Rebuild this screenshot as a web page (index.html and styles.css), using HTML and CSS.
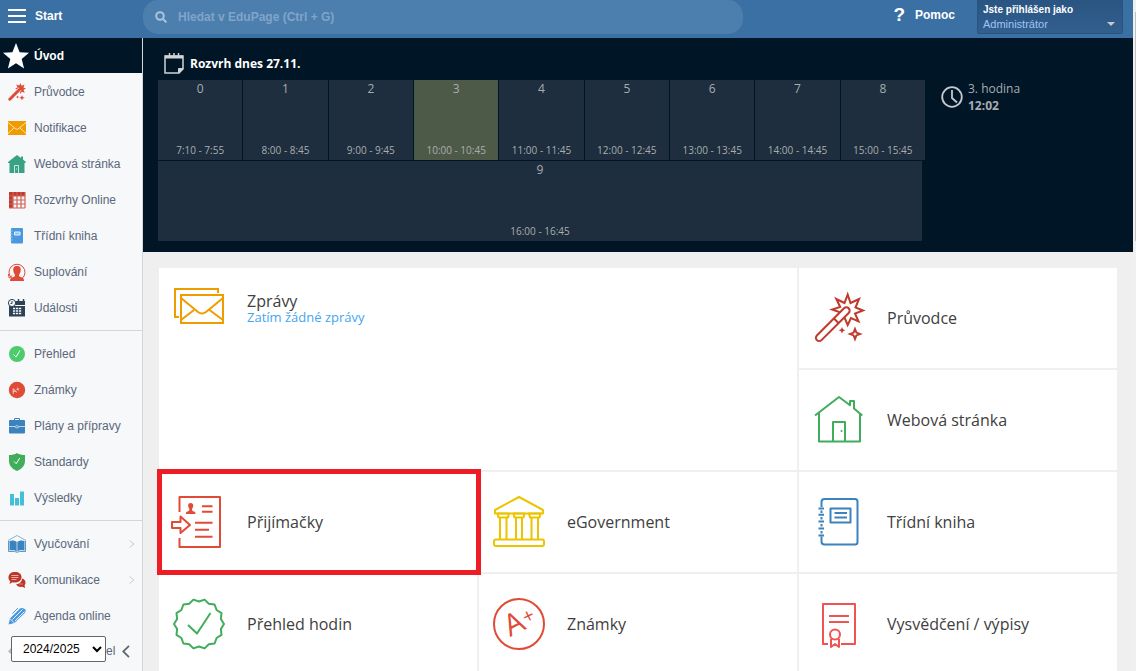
FILE: index.html
```html
<!DOCTYPE html>
<html lang="cs">

<head>
    <meta charset="utf-8">
    <meta name="viewport" content="width=device-width, initial-scale=1.0">
    <title>EduPage</title>
    <link rel="stylesheet" href="styles.css">
</head>

<body>
    <div class="page">
        <header class="topbar">
            <button class="start" type="button">
                <svg width="18" height="14" viewBox="0 0 18 14" aria-hidden="true"><path d="M0 1h18M0 7h18M0 13h18" stroke="#fff" stroke-width="2"/></svg>
                Start
            </button>
            <form class="search">
                <svg width="12" height="12" viewBox="0 0 12 12" fill="none" stroke="#a9c3dd" stroke-width="2" aria-hidden="true"><circle cx="5" cy="5" r="3.8"/><path d="M8 8l3.4 3.4"/></svg>
                <input type="text" placeholder="Hledat v EduPage (Ctrl + G)" aria-label="Hledat v EduPage">
            </form>
            <div class="topright">
                <a class="help" href="#"><span class="question">?</span>Pomoc</a>
                <button class="user" type="button">
                    <span class="logged">Jste přihlášen jako</span>
                    <span class="role">Administrátor</span>
                    <svg width="8" height="4" viewBox="0 0 8 4" aria-hidden="true"><path d="M0 0h8L4 4z" fill="#c5c9cd"/></svg>
                </button>
            </div>
        </header>

        <nav class="sidebar">
            <a class="item active" href="#">
                <svg class="star" width="26" height="26" viewBox="0 0 26 26"><path d="M13 0l3.6 9.2 9.4.5-7.3 6.2 2.4 9.6L13 20.300l-8.100 5.200 2.400-9.600L0 9.700l9.400-.5z" fill="#fff"/></svg>
                Úvod
            </a>
            <a class="item" href="#">
                <svg class="ico" viewBox="0 0 18 18"><path d="M12.500 0l1 2.700 3-1.200-1 3 2.500 1.300-2.500 1 1.200 3-3-1-1.300 2.200-1-2.700-3 1 1-3L7 5.500l2.600-1L8.200 1.600l3 1z" fill="#e04b38"/><path d="M1.500 16.500L12 6" stroke="#f6f8fa" stroke-width="4"/><path d="M1.800 16.200L11.500 6.500" stroke="#e04b38" stroke-width="3" stroke-linecap="round"/><path d="M14 12l.8 2 2 .8-2 .8-.8 2-.8-2-2-.8 2-.8zM9.500 12.500l.5 1 1 .5-1 .5-.5 1-.5-1-1-.5 1-.5z" fill="#e04b38"/></svg>
                Průvodce
            </a>
            <a class="item" href="#">
                <svg class="ico" viewBox="0 0 18 18"><path d="M0 2h18v14H0z" fill="#f09c00"/><path d="M0 3.500l8 6.500q1 .8 2 0l8-6.500M0 14.500l6-5.500M18 14.500L12 9" fill="none" stroke="#fbe5b5"/></svg>
                Notifikace
            </a>
            <a class="item" href="#">
                <svg class="ico" viewBox="0 0 18 18"><path d="M9 0l4 3V1.500h2V4.500l3 2.500-.7 1H16.500v10H1.500V8H0V7z" fill="#3aa284"/><path d="M6.500 18v-7.500h4V18" fill="none" stroke="#c9e8de"/><path d="M8 14h1" stroke="#c9e8de"/></svg>
                Webová stránka
            </a>
            <a class="item" href="#">
                <svg class="ico" viewBox="0 0 18 18"><path d="M1 1h16v4H5v12H1z" fill="#c23a2c"/><path d="M1 5h16M1 9h16M1 13h16M1 17h16M5 1v16M9 1v16M13 1v16M17 1v16" stroke="#cf6156" stroke-width="1.200"/></svg>
                Rozvrhy Online
            </a>
            <a class="item" href="#">
                <svg class="ico" viewBox="0 0 18 18"><rect x="3" y="1" width="12" height="15.500" rx="1" fill="#4a98dd"/><path d="M6.500 5h5.500v3H6.500z" fill="#8dc0ee" stroke="#e8f3fd"/><path d="M2 4h2.500M2 7h2.500M2 10h2.500M2 13h2.500" stroke="#a9cdef"/></svg>
                Třídní kniha
            </a>
            <a class="item" href="#">
                <svg class="ico" viewBox="0 0 18 18"><path d="M4 15.500A8 8 0 1 1 14 15.500" fill="none" stroke="#e04b38"/><path d="M.3 11l1 4 3-2.500" fill="none" stroke="#e04b38"/><path d="M9 3c3 0 4 2 3.700 4.500C12.500 10 11.500 11 11 12c0 1.500 1 2 3 2.500 1.500.5 2 1.500 2 3.500H2c0-2 .5-3 2-3.500 2-.5 3-1 3-2.500-.5-1-1.500-2-1.700-4.500C5 5 6 3 9 3z" fill="#e04b38"/></svg>
                Suplování
            </a>
            <a class="item" href="#">
                <svg class="ico" viewBox="0 0 18 18"><path d="M1 2h16v15.500H1z" fill="#2e4257"/><path d="M5 6.500h13" stroke="#f6f8fa"/><path d="M5 9.500h9M5 12h9M5 14.500h9" stroke="#f6f8fa" stroke-width="1.600" stroke-dasharray="2.200 .8"/><path d="M10.500 0v3.500M15.500 0v3.500" stroke="#2e4257" stroke-width="1.500"/><circle cx="4" cy="4" r="3.600" fill="#f6f8fa" stroke="#2e4257"/><path d="M4 2v2.500H2.500" fill="none" stroke="#2e4257"/></svg>
                Události
            </a>
            <hr>
            <a class="item" href="#">
                <svg class="ico" viewBox="0 0 18 18"><circle cx="9" cy="9" r="8" fill="#4ccc6c"/><path d="M5.500 9.500l2.500 2.500L12 5.500" fill="none" stroke="#fff"/></svg>
                Přehled
            </a>
            <a class="item" href="#">
                <svg class="ico" viewBox="0 0 18 18"><circle cx="9" cy="9" r="8.200" fill="#e04b38"/><text class="grade-small" transform="translate(5 13) rotate(-22)">A+</text></svg>
                Známky
            </a>
            <a class="item" href="#">
                <svg class="ico" viewBox="0 0 18 18"><path d="M6.500 3V1.500h5V3" fill="none" stroke="#3c82bd"/><rect x="1" y="3" width="16" height="13.500" rx="1" fill="#3c82bd"/><path d="M1 9.500h6M11 9.500h6" stroke="#b9d5eb"/><ellipse cx="9" cy="9.800" rx="1.800" ry="1.100" fill="none" stroke="#b9d5eb"/></svg>
                Plány a přípravy
            </a>
            <a class="item" href="#">
                <svg class="ico" viewBox="0 0 18 18"><path d="M9 0c2 1.500 5 2 8 2v6c0 5-4 8.500-8 10-4-1.500-8-5-8-10V2c3 0 6-.5 8-2z" fill="#40ad5b"/><path d="M6 8.500l2.200 2.200L11.800 5" fill="none" stroke="#fff"/></svg>
                Standardy
            </a>
            <a class="item" href="#">
                <svg class="ico" viewBox="0 0 18 18"><path d="M2 5h4v11.500H2zM7 9h4v7.500H7zM12 2.500h4v14h-4z" fill="#44bfd8"/></svg>
                Výsledky
            </a>
            <hr>
            <a class="item" href="#">
                <svg class="ico" viewBox="0 0 18 18"><path d="M0 5.500l9-5 9 5" fill="none" stroke="#85b3d8"/><path d="M1.500 6c3-1 5.500-.5 7.500 1 2-1.500 4.500-2 7.500-1v9.500c-3-.5-5.500-.5-7.500 1-2-1.500-4.500-1.500-7.500-1z" fill="#3c82bd"/><path d="M9 7v9" stroke="#b9d5eb"/><path d="M.5 6v10.500h6l2.500.8 2.500-.8h6V6" fill="none" stroke="#5c99cb"/></svg>
                Vyučování
                <svg class="more" viewBox="0 0 6 8"><path d="M.5.5L5 4 .5 7.500"/></svg>
            </a>
            <a class="item" href="#">
                <svg class="ico" viewBox="0 0 18 18"><path d="M7 1c4 0 6.500 2 6.500 5S11 11.500 7 11.500c-1 0-1.500 0-2.500-.3L1.500 13l.8-2.800C1 9.500.5 8 .5 6.500.5 3 3 1 7 1z" fill="#bf3527"/><path d="M3.500 4.500h7M3.500 6.500h7M3.500 8.500h5" stroke="#f3d0cb" stroke-width=".8"/><path d="M14 7.500c2 .5 3.500 2 3.500 4 0 1.500-.5 2-1 2.700l.7 2.800-3-1.200c-3 .5-5-.6-6-2.600 3.500-.2 5.800-2.700 5.800-5.700z" fill="#bf3527"/><path d="M11.500 13h1M13.500 13h1" stroke="#f3d0cb"/></svg>
                Komunikace
                <svg class="more" viewBox="0 0 6 8"><path d="M.5.5L5 4 .5 7.500"/></svg>
            </a>
            <a class="item" href="#">
                <svg class="ico" viewBox="0 0 18 18"><path d="M.5 17.500L2 11.500 12 1.500c1-1 3-.5 4 0l1.500 1.200c.5 1 0 2.300-.8 3.300L6.500 16z" fill="#4a98dd"/><path d="M2.200 11.800l4 4M4.500 12.500L14.500 2.500M7 14L16.500 4.500" stroke="#e4f0fb"/><path d="M10 1L4.500 6.500" stroke="#4a98dd"/></svg>
                Agenda online
            </a>
            <div class="sidefoot">
                <svg width="3" height="6" viewBox="0 0 3 6"><path d="M3 0v6L0 3.500z" fill="#b4bdb9"/></svg>
                <select aria-label="Školní rok">
                    <option>2024/2025</option>
                </select>
                <span>el</span>
                <button class="collapse" type="button" aria-label="Skrýt menu">
                    <svg width="8" height="13" viewBox="0 0 8 13"><path d="M7 .8L1.200 6.500 7 12.200" fill="none" stroke="#60686f" stroke-width="1.800"/></svg>
                </button>
            </div>
        </nav>

        <main>
            <section class="today">
                <h1>
                    <svg width="20" height="22" viewBox="0 0 20 22" fill="none" stroke="#d0d4d7"><path d="M1 21V4h18v13l-4 4z" stroke-width="1.500"/><path d="M1 5h18" stroke-width="3"/><path d="M5.500 1v5M10 1v5M14.500 1v5" stroke-width="1.500"/><path d="M14.500 21v-4.500H19z" fill="#d0d4d7"/></svg>
                    Rozvrh dnes 27.11.
                </h1>
                <div class="today-row">
                    <ol class="lessons">
                        <li><b>0</b><span>7:10 - 7:55</span></li>
                        <li><b>1</b><span>8:00 - 8:45</span></li>
                        <li><b>2</b><span>9:00 - 9:45</span></li>
                        <li class="now"><b>3</b><span>10:00 - 10:45</span></li>
                        <li><b>4</b><span>11:00 - 11:45</span></li>
                        <li><b>5</b><span>12:00 - 12:45</span></li>
                        <li><b>6</b><span>13:00 - 13:45</span></li>
                        <li><b>7</b><span>14:00 - 14:45</span></li>
                        <li><b>8</b><span>15:00 - 15:45</span></li>
                        <li class="wide"><b>9</b><span>16:00 - 16:45</span></li>
                    </ol>
                    <div class="clock">
                        <svg width="22" height="22" viewBox="0 0 22 22" fill="none" stroke="#c6cace" stroke-width="1.800"><circle cx="11" cy="11" r="9.800"/><path d="M11 4v8l5 4.500"/></svg>
                        <p>3. hodina<br><strong>12:02</strong></p>
                    </div>
                </div>
            </section>

            <section class="tiles">
                <a class="tile news" href="#">
                    <svg class="big orange" viewBox="0 0 52 52"><path d="M8 13h42v28H8zM45 11V7H2v28h4M8 16l17 14q4 3 8 0l17-14M8 38l13-10M50 38L36.500 28"/></svg>
                    <span>Zprávy<small>Zatím žádné zprávy</small></span>
                </a>
                <a class="tile" href="#">
                    <svg class="big darkred" viewBox="0 0 52 52"><path d="M34.700 2.500l2.800 8.500L46 7l-3.500 8.500 7.500 3-8 3 3.500 7.800-7.500-3.300-3.300 7-3-7-4-5.500-8.500-3 8-2.500L23.300 7l8.200 4z"/><rect class="cut" x="-20" y="-3.300" width="45" height="6.600" rx="3.300" transform="translate(18 34) rotate(-45)"/><path d="M21 26.500l4.700 4.700"/><path d="M42 37l1.400 3.600L47 42l-3.600 1.400L42 47l-1.400-3.600L37 42l3.600-1.400z"/><path class="fill-darkred" d="M29 35l1 2.300 2.300 1-2.300 1-1 2.300-1-2.300-2.300-1 2.300-1z"/></svg>
                    <span>Průvodce</span>
                </a>
                <a class="tile" href="#">
                    <svg class="big green" viewBox="0 0 52 52"><path d="M2 21.500L26 3l11 8.300V7h4v7.500l8.300 7M6 19v28.500h41V19M20 47V28h12v19"/><circle class="dot-green" cx="28.500" cy="37" r="1"/></svg>
                    <span>Webová stránka</span>
                </a>
                <a class="tile marked" href="#">
                    <svg class="big red" viewBox="0 0 52 52"><path d="M6.500 16V1H47v50H6.500V42"/><path d="M-1 26h8.500v-5.500L17 29l-9.500 8v-5H-1zM29 10.300h10.500M29 15.700h10.500M22 26.700h17.500M22 33.700h14M22 40.700h17.500"/><path class="fill-red" d="M17.700 7c2 0 2.700 1.200 2.500 3-.2 1.500-.8 2.200-1.200 3 0 1.700.5 2 2 2.500 1 .3 1.500 1 1.500 2.500h-9.600c0-1.500.5-2.200 1.500-2.500 1.500-.5 2-.8 2-2.500-.4-.8-1-1.500-1.200-3-.2-1.800.5-3 2.500-3z"/></svg>
                    <span>Přijímačky</span>
                </a>
                <a class="tile" href="#">
                    <svg class="big yellow" viewBox="0 0 52 52"><path d="M2 14L26 1l24 13v3.500H2z"/><rect x="1" y="43.500" width="50" height="6.500" rx="2"/><path d="M4.500 17.500h11.500l-1 4H5.500zM20.500 17.500h11l-1 4h-9zM36 17.500h11.500l-1 4H37zM7 21.500v22M13.500 21.500v22M23 21.500v22M29 21.500v22M38.500 21.500v22M45 21.500v22"/></svg>
                    <span>eGovernment</span>
                </a>
                <a class="tile" href="#">
                    <svg class="big blue" viewBox="0 0 52 52"><path d="M8.500 11V6q0-3 3-3H42q2.500 0 2.500 2.500v40.500q0 2.500-2.500 2.500H11.500q-3 0-3-3v-5"/><path d="M5.500 12.500H11M5.500 18.700H11M5.500 25.500H11M5.500 32.500H11M5.500 39.500H11M8.500 14.500v2.500M8.500 21v2.500M8.500 28v2.500M8.500 35v2.500M17.500 12.500h20v14h-20zM21.500 17h12.500M21.500 21.500h12.500"/></svg>
                    <span>Třídní kniha</span>
                </a>
                <a class="tile" href="#">
                    <svg class="big green" viewBox="0 0 52 52"><path d="M51 26L47.900 31 48.500 36.800 43.600 40 41.600 45.500 35.800 46.300 31.600 50.400 26 48.500 20.400 50.400 16.200 46.300 10.400 45.500 8.400 40 3.500 36.800 4.100 31 1 26 4.100 21 3.500 15.200 8.400 12 10.400 6.500 16.200 5.700 20.400 1.600 26 3.500 31.600 1.600 35.800 5.700 41.600 6.500 43.600 12 48.500 15.200 47.900 21zM15 27l9 8.500L37.500 15"/></svg>
                    <span>Přehled hodin</span>
                </a>
                <a class="tile" href="#">
                    <svg class="big red" viewBox="0 0 52 52"><circle cx="26" cy="26" r="25"/><text class="grade" transform="translate(17 39) rotate(-26)">A<tspan class="plus" dx="1" dy="-4">+</tspan></text></svg>
                    <span>Známky</span>
                </a>
                <a class="tile" href="#">
                    <svg class="big coral" viewBox="0 0 52 52"><path d="M15 46H10V6h32v40H28M16 18h20M16 24h20"/><circle cx="22" cy="36.500" r="5"/><path d="M18 41v8l4-3 4 3v-8"/></svg>
                    <span>Vysvědčení / výpisy</span>
                </a>
            </section>
        </main>

        <div class="rail"></div>
    </div>
</body>

</html>
```
FILE: styles.css
```css
* {
    box-sizing: border-box;
}

body {
    margin: 0;
    font-family: "Open Sans", sans-serif;
    background: #efefef;
}

a {
    text-decoration: none;
    color: inherit;
}

button {
    border: 0;
    padding: 0;
    background: none;
    font: inherit;
    color: inherit;
    cursor: pointer;
}

.page {
    display: grid;
    grid-template-columns: 143px 1fr 3px;
    grid-template-rows: 38px 1fr;
    height: 100vh;
    overflow: hidden;
}

/* top bar */
.topbar {
    grid-column: 1 / 3;
    display: grid;
    grid-template-columns: 143px minmax(200px, 600px) 1fr;
    align-items: start;
    background: #3b70a4;
    color: #fff;
    font: bold 12px "Liberation Sans", Arial, sans-serif;
}

.start {
    display: flex;
    align-items: center;
    gap: 9px;
    height: 31px;
    padding-left: 8px;
}

.search {
    display: flex;
    align-items: center;
    gap: 11px;
    height: 34px;
    padding: 0 12px;
    border-radius: 15px;
    background: #4c7eae;
}

.search input {
    flex: 1;
    border: 0;
    padding: 0;
    background: none;
    font: inherit;
    color: #fff;
    outline: none;
}

.search input::placeholder {
    color: #80a5c9;
    opacity: 1;
}

.topright {
    display: flex;
    justify-content: flex-end;
    gap: 22px;
    padding-right: 10px;
}

.help {
    display: flex;
    align-items: center;
    gap: 10px;
    height: 30px;
}

.question {
    font-size: 19px;
}

.user {
    position: relative;
    width: 146px;
    height: 34px;
    padding: 2px 5px;
    border: 1px solid #2a5480;
    border-top: 0;
    border-radius: 0 0 2px 2px;
    background: linear-gradient(#2a5582, #315f8e);
    text-align: left;
    font-size: 10px;
    line-height: 14px;
}

.user span {
    display: block;
}

.user .role {
    color: #a3c4f0;
    font-size: 11px;
    font-weight: normal;
}

.user svg {
    position: absolute;
    right: 7px;
    bottom: 7px;
}

/* left menu */
.sidebar {
    overflow: hidden;
    border-right: 1px solid #d4d7d9;
    background: #f6f8fa;
    color: #5b677b;
    font: 12px "Liberation Sans", Arial, sans-serif;
}

.item {
    display: flex;
    align-items: center;
    gap: 8px;
    height: 36px;
    padding-left: 8px;
}

.item.active {
    gap: 5px;
    height: 35px;
    margin: 0 -1px 1px 0;
    padding-left: 3px;
    background: #001526;
    color: #fff;
    font-weight: bold;
}

.ico {
    width: 18px;
    height: 18px;
}

.more {
    width: 6px;
    height: 8px;
    margin-left: auto;
    margin-right: 7px;
    fill: none;
    stroke: #c9cdd1;
}

.grade-small {
    font: 7px "Open Sans", sans-serif;
    fill: #fff;
}

.sidebar hr {
    margin: 4px 0 5px;
    border: 0;
    border-top: 1px solid #d4d7d9;
}

.sidefoot {
    display: flex;
    align-items: center;
    height: 34px;
    padding-left: 8px;
}

.sidefoot select {
    width: 95px;
    height: 26px;
    margin-bottom: 4px;
    padding: 0 0 0 7px;
    border: 1px solid #666;
    border-radius: 2px;
    background: #fff;
    color: #000;
    font: 12px "Liberation Sans", Arial, sans-serif;
}

.collapse {
    display: flex;
    margin-left: 7px;
}

/* timetable */
.today {
    padding: 14px 15px 11px;
    background: #001526;
    color: #a9adb0;
    font-size: 12px;
}

.today h1 {
    display: flex;
    align-items: center;
    gap: 6px;
    height: 22px;
    margin: 0 0 6px 6px;
    color: #fff;
    font-size: 12px;
}

.today-row {
    display: flex;
    gap: 16px;
}

.lessons {
    flex: 1;
    display: grid;
    grid-template-columns: repeat(9, 1fr);
    gap: 1px;
    margin: 0;
    padding: 0;
    list-style: none;
}

.lessons li {
    display: flex;
    flex-direction: column;
    justify-content: space-between;
    align-items: center;
    height: 80px;
    padding: 1px 0 2px;
    background: #1e2e3e;
    line-height: 16px;
}

.lessons b {
    font-weight: normal;
}

.lessons span {
    font-size: 10px;
}

.lessons .now {
    background: #4e5a48;
}

.lessons .wide {
    grid-column: 1 / -1;
    margin-right: 3px;
}

.clock {
    display: flex;
    align-items: flex-start;
    gap: 5px;
    width: 177px;
}

.clock svg {
    margin-top: 6px;
}

.clock p {
    margin: 0;
    line-height: 17px;
}

/* tiles */
main {
    min-width: 0;
    overflow: hidden;
}

.tiles {
    display: grid;
    grid-template-columns: repeat(3, 1fr);
    grid-auto-rows: 100px;
    gap: 2px;
    padding: 16px;
}

.tile {
    position: relative;
    display: flex;
    align-items: center;
    gap: 22px;
    padding-left: 14px;
    background: #fff;
    color: #404040;
    font-size: 16px;
    line-height: 16px;
}

.tile small {
    display: block;
    color: #45a5f0;
    font-size: 13px;
}

.news {
    grid-column: span 2;
    grid-row: span 2;
    align-items: flex-start;
    padding-top: 14px;
}

.news span {
    padding-top: 11px;
}

.marked::after {
    content: "";
    position: absolute;
    z-index: 1;
    inset: -3px -4px -3px -2px;
    border: 5px solid #ee1c25;
}

.big {
    width: 52px;
    height: 52px;
    overflow: visible;
    fill: none;
    stroke-width: 2;
    stroke-linejoin: round;
}

.orange {
    stroke: #ee9c00;
    stroke-linejoin: miter;
}

.darkred {
    stroke: #c0392b;
    stroke-linejoin: miter;
}

.green {
    stroke: #41ad5c;
}

.red {
    stroke: #e04b38;
}

.yellow {
    stroke: #ecc500;
}

.blue {
    stroke: #3c82bd;
}

.coral {
    stroke: #f05452;
}

.cut {
    fill: #fff;
}

.fill-darkred {
    fill: #c0392b;
    stroke: none;
}

.dot-green {
    fill: #41ad5c;
    stroke: none;
}

.fill-red {
    fill: #e04b38;
    stroke: none;
}

.grade {
    font: 30px "Open Sans", sans-serif;
    fill: #e04b38;
    stroke: none;
}

.plus {
    font-size: 20px;
}

/* scrollbar strip */
.rail {
    grid-column: 3;
    grid-row: 1 / 3;
    border-top: 12px solid #f0f0f0;
    border-left: 2px solid #f0f0f0;
    background: linear-gradient(#c1c1c1 229px, #f0f0f0 229px);
}
```
